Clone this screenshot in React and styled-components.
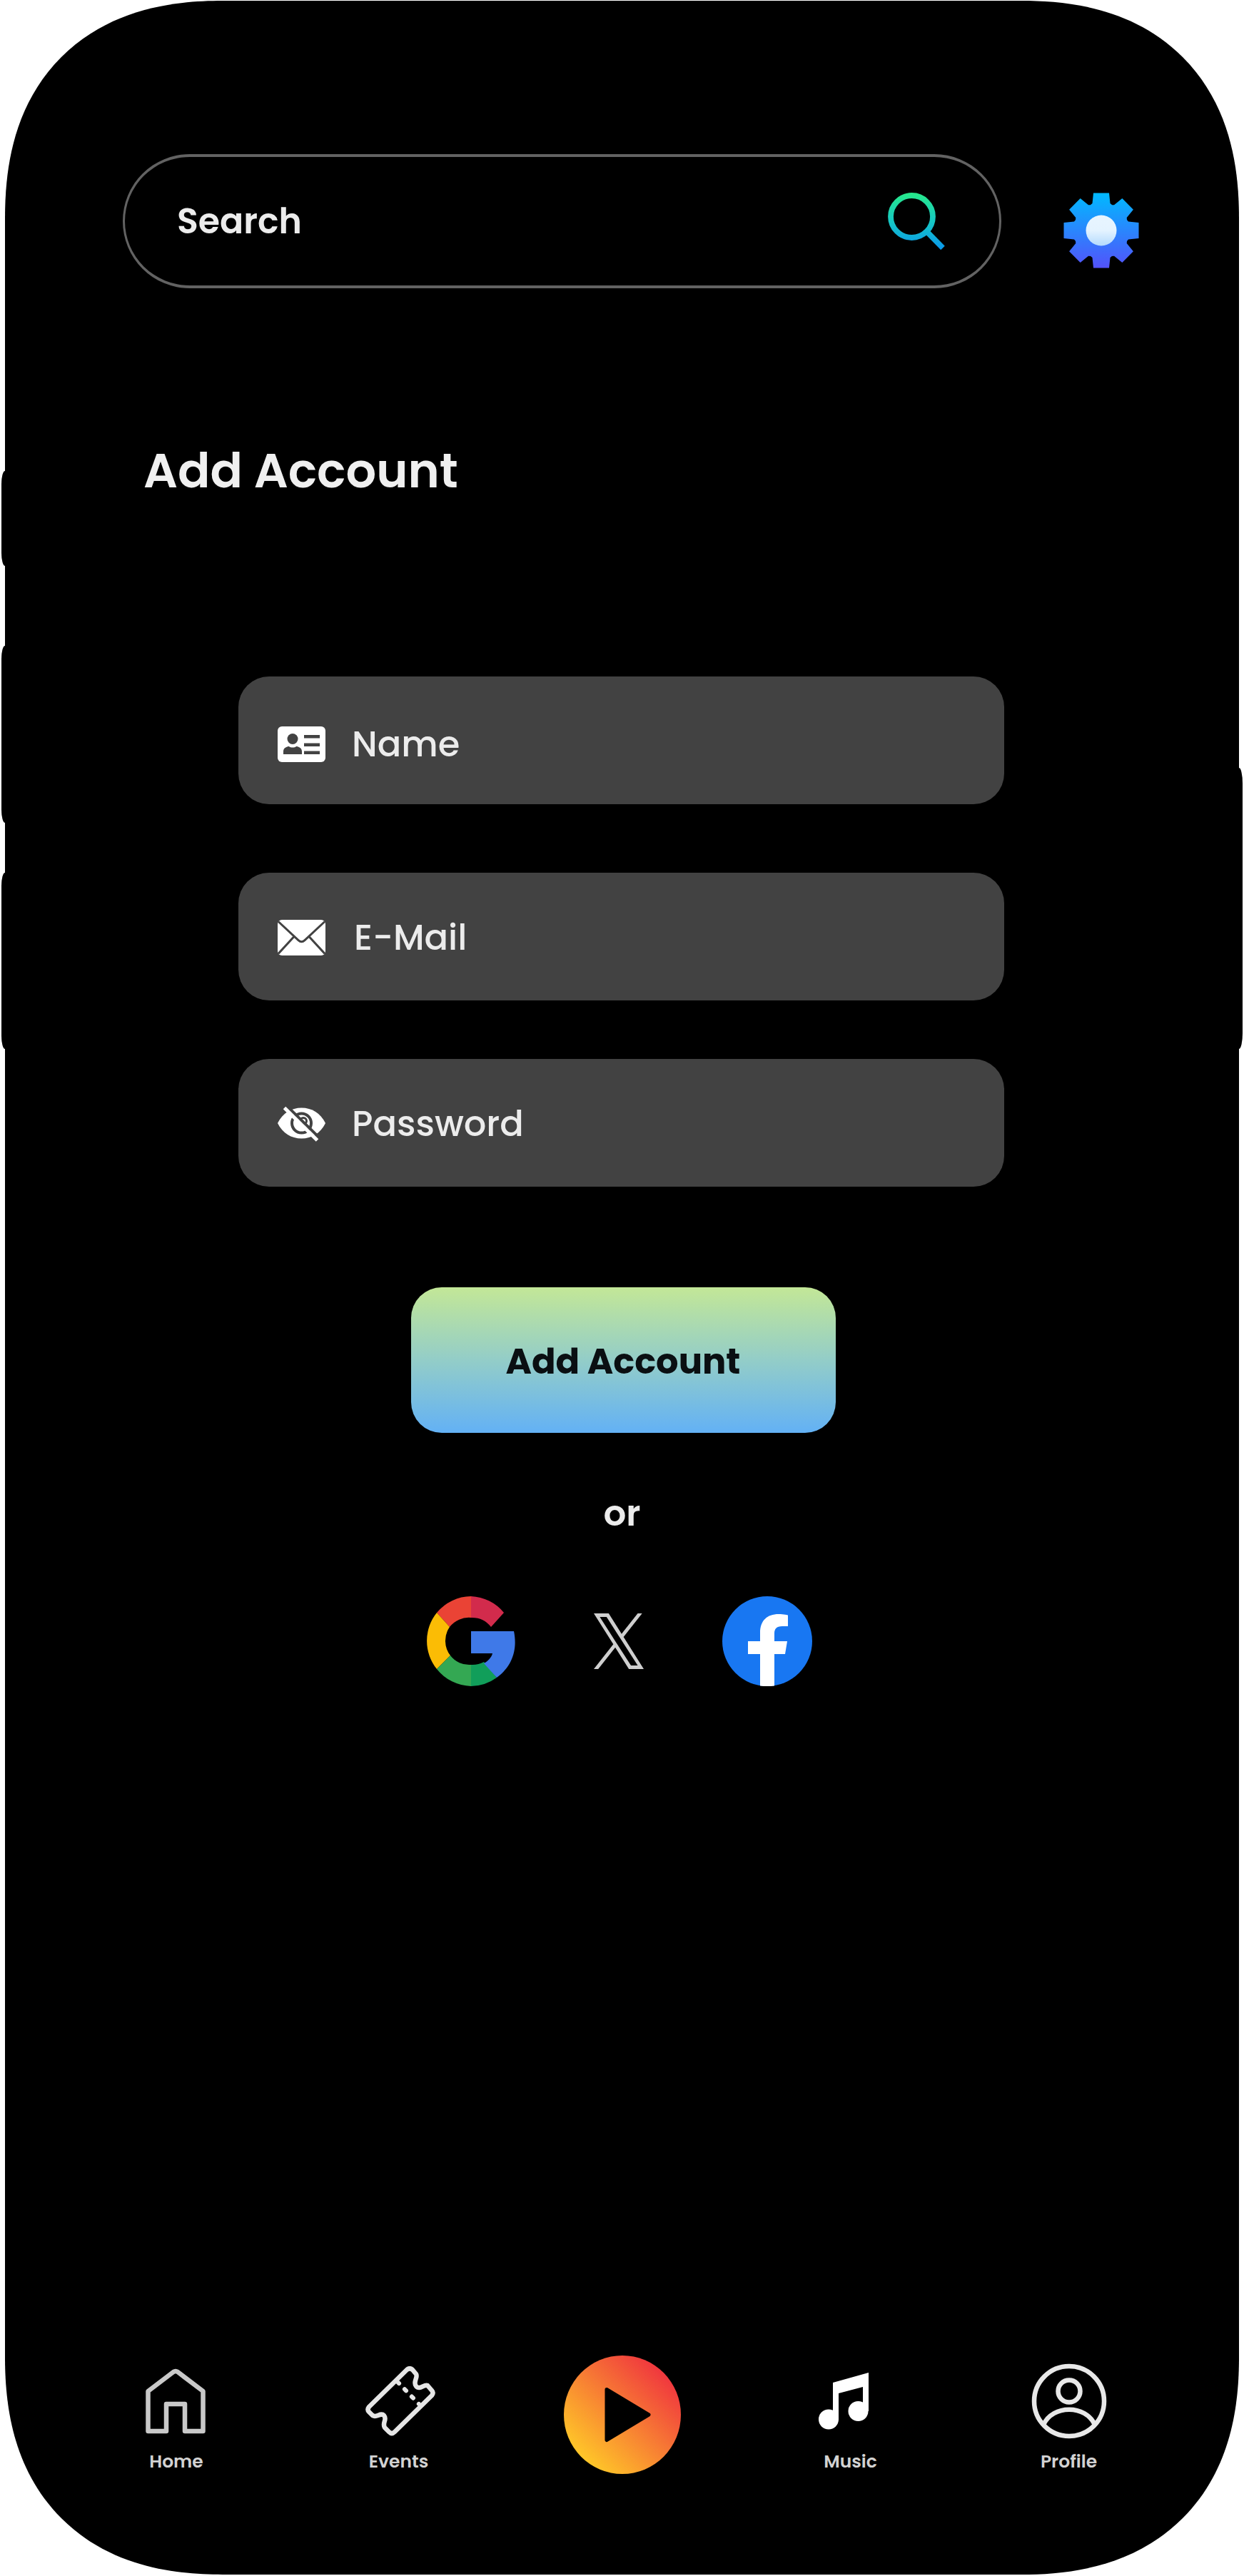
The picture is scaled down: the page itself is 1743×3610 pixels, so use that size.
import React from "react";
import styled, { createGlobalStyle } from "styled-components";

const GlobalStyle = createGlobalStyle`
  * { box-sizing: border-box; }
  body {
    margin: 0;
    background: #fff;
    font-family: Poppins, Inter, "Open Sans", sans-serif;
  }
  button { font-family: inherit; border: 0; padding: 0; background: none; cursor: pointer; }
  svg { display: block; flex: none; }
`;

const Page = styled.div`
  width: 1743px;
  height: 3610px;
  padding: 1px 7px 2px;
  overflow: hidden;
`;

const Phone = styled.main`
  position: relative;
  height: 3607px;
  background: #000;
  border-radius: 270px;
  @supports (corner-shape: superellipse(1.2)) {
    border-radius: 305px;
    corner-shape: superellipse(1.21);
  }
`;

const SideKey = styled.span`
  position: absolute;
  top: ${(p) => p.$top}px;
  height: ${(p) => p.$height}px;
  width: 5px;
  background: #000;
  ${(p) =>
    p.$right
      ? "right: -5px; border-radius: 0 5px 5px 0 / 0 22px 22px 0;"
      : "left: -5px; border-radius: 5px 0 0 5px / 18px 0 0 18px;"}
`;

const Screen = styled.div`
  display: flex;
  flex-direction: column;
  align-items: center;
  height: 100%;
  padding-top: 215px;
`;

const Header = styled.header`
  align-self: stretch;
  display: flex;
  align-items: flex-start;
  padding-left: 165px;
`;

const SearchBar = styled.div`
  display: flex;
  align-items: center;
  justify-content: space-between;
  width: 1231px;
  height: 188px;
  padding: 0 76px 0 73px;
  border: solid #626262;
  border-width: 4px 3px;
  border-radius: 94px;
`;

const Text = styled.span`
  color: ${(p) => p.$color || "#ececec"};
  font-size: ${(p) => p.$size || 49.5}px;
  font-weight: ${(p) => p.$weight || 500};
  letter-spacing: ${(p) => p.$track || 0}px;
  line-height: 60px;
  white-space: nowrap;
`;

const IconButton = styled.button`
  margin: 54px 0 0 87px;
`;

const Title = styled.h1`
  align-self: flex-start;
  margin: 216px 0 0 194px;
  color: #f0f0f0;
  font-size: 67px;
  font-weight: 600;
  line-height: 80px;
`;

const Form = styled.div`
  display: flex;
  flex-direction: column;
  align-items: center;
  margin: 248px 2px 0 0;
`;

const Field = styled.label`
  display: flex;
  align-items: center;
  width: 1073px;
  height: 179px;
  margin-bottom: ${(p) => p.$gap}px;
  padding: ${(p) => p.$drop || 0}px 0 0 55px;
  gap: ${(p) => p.$space || 37}px;
  background: #424242;
  border-radius: 43px;
`;

const Submit = styled.button`
  width: 595px;
  height: 204px;
  margin-left: 5px;
  padding-top: 3px;
  border-radius: 43px;
  background: linear-gradient(#c3e797, #93cdc8 50%, #63b1f5);
`;

const Divider = styled.div`
  height: 60px;
  margin-top: 83px;
`;

const Socials = styled.div`
  display: flex;
  align-items: center;
  margin: 86px 8px 0 0;
`;

const SocialButton = styled.button`
  margin-left: ${(p) => p.$space || 0}px;
`;

const Nav = styled.nav`
  display: grid;
  grid-template-columns: repeat(5, 313px);
  margin-top: 938px;
  height: 167px;
`;

const NavItem = styled.a`
  display: flex;
  flex-direction: column;
  align-items: center;
  justify-content: ${(p) => (p.$center ? "flex-start" : "space-between")};
`;

const NavIcon = styled.span`
  display: flex;
  align-items: center;
  height: ${(p) => p.$height || 128}px;
  margin-left: ${(p) => p.$nudge || 0}px;
  margin-right: ${(p) => p.$shift || 0}px;
`;

const NavLabel = styled.span`
  color: #d2d2d2;
  font-size: 25px;
  font-weight: 600;
  line-height: 42px;
  margin-left: ${(p) => p.$nudge || 0}px;
`;

const SearchIcon = () => (
  <svg width="80" height="80" viewBox="0 0 80 80" fill="none">
    <defs>
      <linearGradient id="lens" x1="0" y1="2" x2="0" y2="78" gradientUnits="userSpaceOnUse">
        <stop stopColor="#26e88c" />
        <stop offset="0.5" stopColor="#16c8c4" />
        <stop offset="1" stopColor="#0a98ea" />
      </linearGradient>
    </defs>
    <g stroke="url(#lens)" strokeWidth="7.8">
      <circle cx="33.5" cy="33.5" r="29.5" />
      <path d="M54.5 54.5 77 77.5" />
    </g>
  </svg>
);

const tooth = [
  [-15.5, -35.5],
  [-12.5, -38],
  [-11, -52.5],
  [11, -52.5],
  [12.5, -38],
  [15.5, -35.5],
];
const gearPoints = Array.from({ length: 8 }, (_, i) => {
  const a = (i * Math.PI) / 4;
  return tooth
    .map(([x, y]) => [
      (x * Math.cos(a) - y * Math.sin(a)).toFixed(2),
      (x * Math.sin(a) + y * Math.cos(a)).toFixed(2),
    ].join(","))
    .join(" ");
}).join(" ");

const GearIcon = () => (
  <svg width="106" height="106" viewBox="-53 -53 106 106">
    <defs>
      <linearGradient id="gear" x1="0" y1="0" x2="0" y2="1">
        <stop stopColor="#00baff" />
        <stop offset="1" stopColor="#5352fb" />
      </linearGradient>
      <linearGradient id="hub" x1="0" y1="0" x2="0" y2="1">
        <stop stopColor="#e8f5ff" />
        <stop offset="0.5" stopColor="#e4f3ff" />
        <stop offset="1" stopColor="#b4dafd" />
      </linearGradient>
    </defs>
    <polygon points={gearPoints} fill="url(#gear)" />
    <circle r="21.5" fill="url(#hub)" />
  </svg>
);

const CardIcon = () => (
  <svg width="67" height="50" viewBox="0 0 67 50">
    <rect width="67" height="50" rx="6" fill="#fff" />
    <g fill="#424242">
      <circle cx="21" cy="17.5" r="7.5" />
      <path d="M8 39v-4c0-5 5-7 8-7 2 2 8 2 10 0 3 0 8 2 8 7v4z" />
      <path d="M37 12h22v4.4H37zM37 23.6h22V28H37zM37 34.6h22V39H37z" />
    </g>
  </svg>
);

const MailIcon = () => (
  <svg width="67" height="50" viewBox="0 0 67 50" fill="none">
    <rect width="67" height="50" rx="6" fill="#fff" />
    <path
      d="M1 2.5 29 28.6c3 2.8 6 2.8 9 0L66 2.5M1 47.5l22-24M66 47.5l-22-24"
      stroke="#424242"
      strokeWidth="3"
    />
  </svg>
);

const HiddenIcon = () => (
  <svg width="67" height="50" viewBox="0 0 67 50" fill="none">
    <path d="M0 24C7 10 19 2.500 33.500 2.500S60 10 67 24C60 38 48 45.500 33.500 45.500S7 38 0 24z" fill="#fff" />
    <circle cx="33.500" cy="24" r="13.500" stroke="#424242" strokeWidth="4" />
    <circle cx="36" cy="21" r="4.500" stroke="#424242" strokeWidth="3" />
    <path d="M13 0 60 46" stroke="#424242" strokeWidth="4" />
    <path d="M9.500 2.500 55.500 48" stroke="#fff" strokeWidth="5" />
  </svg>
);

const GoogleIcon = () => (
  <svg width="126" height="126" viewBox="-63 -63 126 126">
    <path fill="#ea4335" d="M0-63A63 63 0 0 0-48-40L-30-20A34 34 0 0 1 0-33z" />
    <path fill="#fbbc05" d="M-48-40A63 63 0 0 0-48 39L-29 20A34 34 0 0 1-30-20z" />
    <path fill="#34a853" d="M-48 39A63 63 0 0 0 0 63V33A33 33 0 0 1-29 20z" />
    <path fill="#119e5a" d="M0 63A63 63 0 0 0 36 51L18 29A33 33 0 0 1 0 33z" />
    <path fill="#3f79e8" d="M0-14H60C65 10 59 34 36 51L18 31C24 28 29 22 30 17H0z" />
    <path fill="#d22b4c" d="M0-63A63 63 0 0 1 46-40L28-20A34 34 0 0 0 0-33z" />
  </svg>
);

const XIcon = () => (
  <svg width="70" height="78" viewBox="0 0 1200 1227" preserveAspectRatio="none">
    <path
      fill="#cfcfcf"
      d="M714.163 519.284L1160.89 0H1055.03L667.137 450.887L357.328 0H0L468.492 681.821L0 1226.37H105.866L515.491 750.218L842.672 1226.37H1200L714.137 519.284H714.163ZM569.165 687.828L521.697 619.934L144.011 79.6944H306.615L611.412 515.685L658.88 583.579L1055.08 1150.3H892.476L569.165 687.854V687.828Z"
    />
  </svg>
);

const FacebookIcon = () => (
  <svg width="126" height="126" viewBox="0 0 126 126">
    <circle cx="63" cy="63" r="63" fill="#1877f2" />
    <path
      fill="#fff"
      d="M53 125.500V81H36V63H53V51C53 34 63 25 79 25 86 25 92 26.500 92 26.500V42H84C75 42 73 47 73 52V63H91L88 81H73V125.500Q63 126.500 53 125.500Z"
    />
  </svg>
);

const HomeIcon = () => (
  <svg width="86" height="92" viewBox="0 0 86 92" fill="none">
    <path
      d="M4.500 32 40 5Q43 3 46 5L81.500 32V88H56V50H30V88H4.500Z"
      stroke="#c9c9c9"
      strokeWidth="6.500"
      strokeLinejoin="round"
    />
  </svg>
);

const TicketIcon = () => (
  <svg width="98" height="98" viewBox="0 0 98 98" fill="none">
    <g stroke="#e6e6e6" strokeWidth="6.500" strokeLinejoin="round">
      <path d="M58 5Q62 1.500 66 5L71 11C74 16 66 22 71 28 76 34 82 25 87 27L93 34Q96 37 93 41L41 92Q37 96 33 92L27 86C23 79 31 75 26 69 21 64 16 73 10 69L5 64Q2 61 5 57Z" />
      <path d="M45 22 75 53" strokeWidth="6" strokeLinecap="round" strokeDasharray="3 11.300" />
    </g>
  </svg>
);

const PlayIcon = () => (
  <svg width="164" height="166" viewBox="0 0 164 166">
    <defs>
      <linearGradient id="play" x1="0.15" y1="0.88" x2="0.85" y2="0.15">
        <stop stopColor="#ffc928" />
        <stop offset="1" stopColor="#f0383e" />
      </linearGradient>
    </defs>
    <ellipse cx="82" cy="83" rx="82" ry="83" fill="url(#play)" />
    <path d="M60 47.500 119 83 60 118.500Z" stroke="#000" strokeWidth="5" strokeLinejoin="round" />
  </svg>
);

const MusicIcon = () => (
  <svg width="70" height="80" viewBox="0 0 70 80" fill="#fff">
    <circle cx="14" cy="65.500" r="14" />
    <circle cx="55.500" cy="54" r="14" />
    <path d="M20 14 70 0V54H62V20L28 29V66H20Z" />
  </svg>
);

const ProfileIcon = () => (
  <svg width="106" height="106" viewBox="0 0 106 106" fill="none">
    <g stroke="#e8e8e8" strokeWidth="6.500">
      <circle cx="53" cy="53" r="49" />
      <circle cx="53" cy="39" r="15.500" />
      <path d="M17 86C30 57.500 76 57.500 89 86" />
    </g>
  </svg>
);

export default function App() {
  return (
    <Page>
      <GlobalStyle />
      <Phone>
        <SideKey $top={659} $height={133} />
        <SideKey $top={904} $height={248} />
        <SideKey $top={1222} $height={247} />
        <SideKey $right $top={1075} $height={394} />
        <Screen>
          <Header>
            <SearchBar>
              <Text $weight={600} $size={49}>Search</Text>
              <SearchIcon />
            </SearchBar>
            <IconButton aria-label="Settings">
              <GearIcon />
            </IconButton>
          </Header>
          <Title>Add Account</Title>
          <Form>
            <Field $gap={96} $drop={10}>
              <CardIcon />
              <Text>Name</Text>
            </Field>
            <Field $gap={82} $drop={2} $space={40}>
              <MailIcon />
              <Text>E-Mail</Text>
            </Field>
            <Field $gap={141} $drop={3}>
              <HiddenIcon />
              <Text>Password</Text>
            </Field>
            <Submit>
              <Text $color="#0a0f12" $weight={700} $size={49.5}>Add Account</Text>
            </Submit>
          </Form>
          <Divider>
            <Text $size={50} $weight={600}>or</Text>
          </Divider>
          <Socials>
            <SocialButton aria-label="Google"><GoogleIcon /></SocialButton>
            <SocialButton aria-label="X" $space={109}><XIcon /></SocialButton>
            <SocialButton aria-label="Facebook" $space={110}><FacebookIcon /></SocialButton>
          </Socials>
          <Nav>
            <NavItem>
              <NavIcon><HomeIcon /></NavIcon>
              <NavLabel $nudge={3}>Home</NavLabel>
            </NavItem>
            <NavItem>
              <NavIcon $nudge={5}><TicketIcon /></NavIcon>
              <NavLabel>Events</NavLabel>
            </NavItem>
            <NavItem $center>
              <NavIcon $height={166}><PlayIcon /></NavIcon>
            </NavItem>
            <NavItem>
              <NavIcon $shift={6}><MusicIcon /></NavIcon>
              <NavLabel $nudge={14}>Music</NavLabel>
            </NavItem>
            <NavItem>
              <NavIcon><ProfileIcon /></NavIcon>
              <NavLabel>Profile</NavLabel>
            </NavItem>
          </Nav>
        </Screen>
      </Phone>
    </Page>
  );
}
